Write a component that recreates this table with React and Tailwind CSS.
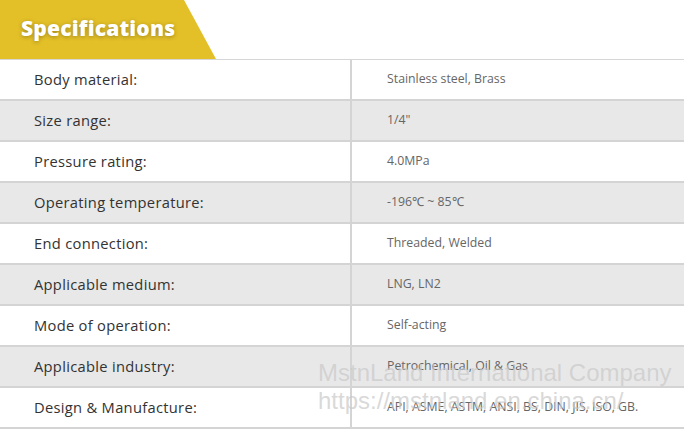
const specs = [
  ['Body material:', 'Stainless steel, Brass'],
  ['Size range:', '1/4"'],
  ['Pressure rating:', '4.0MPa'],
  ['Operating temperature:', '-196℃ ~ 85℃'],
  ['End connection:', 'Threaded, Welded'],
  ['Applicable medium:', 'LNG, LN2'],
  ['Mode of operation:', 'Self-acting'],
  ['Applicable industry:', 'Petrochemical, Oil & Gas'],
  ['Design & Manufacture:', 'API, ASME, ASTM, ANSI, BS, DIN, JIS, ISO, GB.'],
];

export default function App() {
  return (
    <div className="relative w-[684px] h-[429px] overflow-hidden bg-white font-['Open_Sans',sans-serif]">
      {/* Header tab */}
      <div className="h-[59px] border-b border-[#d6d6d6] box-content">
        <div className="h-[59px] w-[216px] bg-[#e3c028] [clip-path:polygon(0_0,184px_0,216px_100%,0_100%)] flex items-center pl-[21px] pb-[1px]">
          <h2 className="text-[21px] font-extrabold text-white tracking-[0.2px] [text-shadow:0_1px_4px_rgba(0,0,0,0.3)]">
            Specifications
          </h2>
        </div>
      </div>

      {/* Table */}
      <div className="flex flex-col">
        {specs.map(([label, value], i) => (
          <div
            key={label}
            className={`flex h-[41px] border-b-2 border-[#d4d4d4] ${i % 2 === 1 ? 'bg-[#e8e8e8]' : 'bg-white'}`}
          >
            <div className="w-[350px] flex items-center pl-[34px] pb-[1px] text-[14.7px] text-[#333] tracking-[0.3px]">
              {label}
            </div>
            <div className="w-[2px] bg-[#d4d4d4]" />
            <div className="flex-1 flex items-center pl-[35px] pb-[1px] text-[12.3px] text-[#666]">
              {value}
            </div>
          </div>
        ))}
      </div>

      {/* Watermark */}
      <div className="absolute left-[318px] top-[359px] pointer-events-none font-['Liberation_Sans',Arial,sans-serif] text-[24px] leading-[28px] text-[rgba(200,200,200,0.7)]">
        <div>MstnLand International Company</div>
        <div>https://mstnland.en.china.cn/</div>
      </div>
    </div>
  );
}
